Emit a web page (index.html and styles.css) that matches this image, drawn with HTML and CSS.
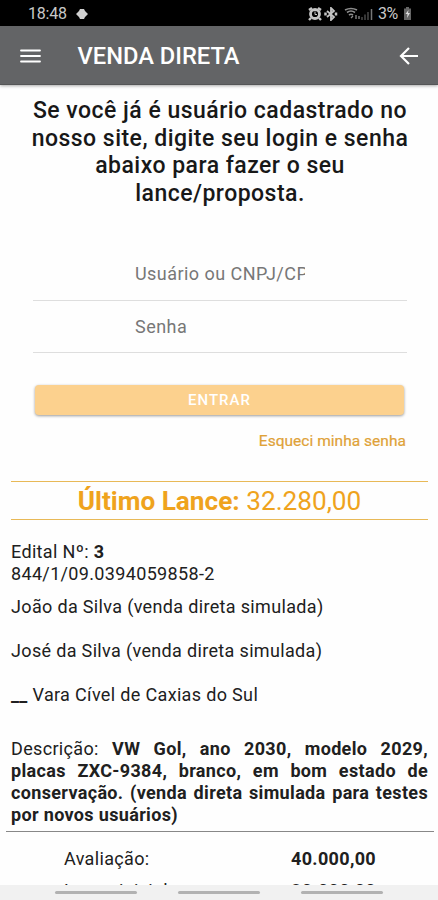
FILE: index.html
```html
<!DOCTYPE html>
<html lang="pt-BR">
<head>
<meta charset="utf-8">
<title>Venda Direta</title>
<link rel="stylesheet" href="styles.css">
</head>
<body>
<div class="screen">
  <div class="status">
    <span class="clock">18:48</span>
    <svg class="dot" width="12" height="12" viewBox="0 0 12 12"><path d="M4 1h4l1 2 3 3-3 3-1 2H4L3 9 0 6l3-3z" fill="#d0d0d0"/></svg>
    <div class="indicators">
      <svg class="alarm" width="14" height="14" viewBox="0 0 14 14" fill="none" stroke="#c4c4c4"><path d="M1 3l3-2M13 3l-3-2M3 11l-2 2M11 11l2 2" stroke-width="2.400"/><circle cx="7" cy="7" r="4.500" stroke-width="2.800"/><path d="M7 4.500v3h2"/></svg>
      <svg class="bluetooth" width="14" height="14" viewBox="0 0 14 14" fill="none" stroke="#c4c4c4" stroke-width="1.800"><path d="M3 4l7 6-3 3V1l3 3-7 6"/><path d="M1.500 5.500v3M12 5.500v3" stroke-width="2.500"/></svg>
      <svg class="wifi" width="17" height="14" viewBox="0 0 17 14" fill="none" stroke="#8c8c8c" stroke-width="1.700"><path d="M1 3q6-3 12 0M3 5.500q4-3 8 0M5 8q2-1.500 4 0"/><path d="M7 11l2-2M12 8v4M15 9v3" stroke-width="1.300"/></svg>
      <svg class="signal" width="12" height="14" viewBox="0 0 12 14" stroke="#484848" stroke-width="1.500"><path d="M1 10v3M4 7.500V13M7 5v8"/><path d="M10.500 2v11" stroke="#777"/></svg>
      <span class="percent">3%</span>
      <svg class="battery" width="9" height="13" viewBox="0 0 9 13"><path d="M3 0h3v1.500h2V13H1V1.500h2z" fill="#666"/><path d="M5.500 3L2.500 7h2L4 11l3-5H5z" fill="#ddd"/></svg>
    </div>
  </div>
  <header class="toolbar">
    <svg class="menu" width="21" height="16" viewBox="0 0 21 16" stroke="#fff" stroke-width="1.800" stroke-linecap="round"><path d="M1 2.500h19M1 8h19M1 13.500h19"/></svg>
    <h1 class="title">VENDA DIRETA</h1>
    <svg class="back" width="20" height="18" viewBox="0 0 20 18" fill="none" stroke="#fff" stroke-width="2.200"><path d="M10 1L2 9l8 8M2 9h17"/></svg>
  </header>
  <main class="content">
    <p class="intro">Se você já é usuário cadastrado no<br>nosso site, digite seu login e senha<br>abaixo para fazer o seu<br>lance/proposta.</p>
    <form class="login">
      <div class="field"><span class="hint">Usuário ou CNPJ/CPF</span></div>
      <div class="field"><span class="hint">Senha</span></div>
      <button class="enter" type="button">ENTRAR</button>
      <a class="forgot">Esqueci minha senha</a>
    </form>
    <div class="bid"><b>Último Lance:</b> 32.280,00</div>
    <section class="details">
      <p class="edital">Edital Nº: <b>3</b><br>844/1/09.0394059858-2</p>
      <p class="party">João da Silva (venda direta simulada)</p>
      <p class="party">José da Silva (venda direta simulada)</p>
      <p class="party"><b>__</b> Vara Cível de Caxias do Sul</p>
      <p class="description">Descrição: <b>VW Gol, ano 2030, modelo 2029, placas ZXC-9384, branco, em bom estado de conservação. (venda direta simulada para testes por novos usuários)</b></p>
    </section>
    <div class="values">
      <div class="row"><span>Avaliação:</span><b>40.000,00</b></div>
      <div class="row"><span>Lance inicial:</span><b>30.000,00</b></div>
    </div>
  </main>
  <nav class="navbar"><i></i><i></i><i></i></nav>
</div>
</body>
</html>
```
FILE: styles.css
```css
* { box-sizing: border-box; }
body { margin: 0; font-family: Roboto, "Liberation Sans", sans-serif; color: #202020; background: #fefefe; }
p, h1 { margin: 0; }
svg { display: block; flex: none; }
.screen { width: 438px; height: 900px; display: flex; flex-direction: column; overflow: hidden; }
.status { flex: none; height: 26px; background: #000; display: flex; align-items: center; padding: 1px 26px 0 28px; color: #c8c8c8; font-size: 16px; }
.clock { width: 48px; letter-spacing: -.2px; }
.indicators { margin-left: auto; display: flex; align-items: center; gap: 3px; }
.alarm { margin-left: -3px; }
.bluetooth { margin-left: -1px; }
.wifi { margin-left: 3px; }
.signal { margin-left: -3px; }
.percent { margin-left: 2px; width: 22px; letter-spacing: -.4px; }
.toolbar { flex: none; height: 59px; background: #636466; display: flex; align-items: center; padding: 1px 19px 0 20px; border-bottom: 1px solid #555657; box-shadow: 0 1px 3px #0005; z-index: 1; }
.title { margin-left: 36.500px; color: #fff; font-size: 23.700px; font-weight: 500; line-height: 28px; }
.back { margin-left: auto; }
.content { flex: 1; min-height: 0; overflow: hidden; }
.intro { padding-top: 12px; text-align: center; font-size: 23px; line-height: 27.700px; font-weight: 500; letter-spacing: .48px; color: #181818; white-space: nowrap; padding-left: 2px; }
.login { margin: 40.500px 31px 0 33px; display: flex; flex-direction: column; }
.field { height: 52.500px; padding: 14px 0 0 102px; border-bottom: 1px solid #dedede; font-size: 18px; line-height: 24px; color: #777; }
.hint { display: block; width: 170px; overflow: hidden; white-space: nowrap; letter-spacing: .45px; }
.enter { height: 30px; margin: 32px 3px 0 2px; border: 0; border-radius: 4px; background: #fcd18e; box-shadow: 0 1px 3px #0006; font: 500 15px/30px Roboto, sans-serif; color: #fff; letter-spacing: 1px; padding: 0; }
.forgot { align-self: flex-end; margin: 15px 1px 0 0; font-size: 15.500px; line-height: 22px; color: #dfa238; letter-spacing: .03px; -webkit-text-stroke: .2px; }
.bid { margin: 29px 10px 0 11px; height: 39px; border-top: 1px solid #e8b957; border-bottom: 1px solid #e8b957; font-size: 26.200px; line-height: 38px; color: #efa31d; text-align: center; white-space: nowrap; }
.details { margin: 21px 10px 0 11px; font-size: 18px; line-height: 22px; letter-spacing: .34px; }
.party { margin-top: 22px; }
.edital + .party { margin-top: 10.500px; }
.description { margin-top: 32px; text-align: justify; }
.values { margin: 5px 4px 0 6px; border-top: 1px solid #888; padding: 15px 54px 0 58px; font-size: 18px; letter-spacing: .34px; }
.row { display: flex; height: 32px; line-height: 24px; }
.row span { width: 227px; }
.navbar { flex: none; height: 15px; background: #f1f1f1; display: flex; justify-content: center; gap: 41px; padding-top: 6px; }
.navbar i { width: 82px; height: 3px; background: #b2b2b2; border-radius: 2px; }
```
